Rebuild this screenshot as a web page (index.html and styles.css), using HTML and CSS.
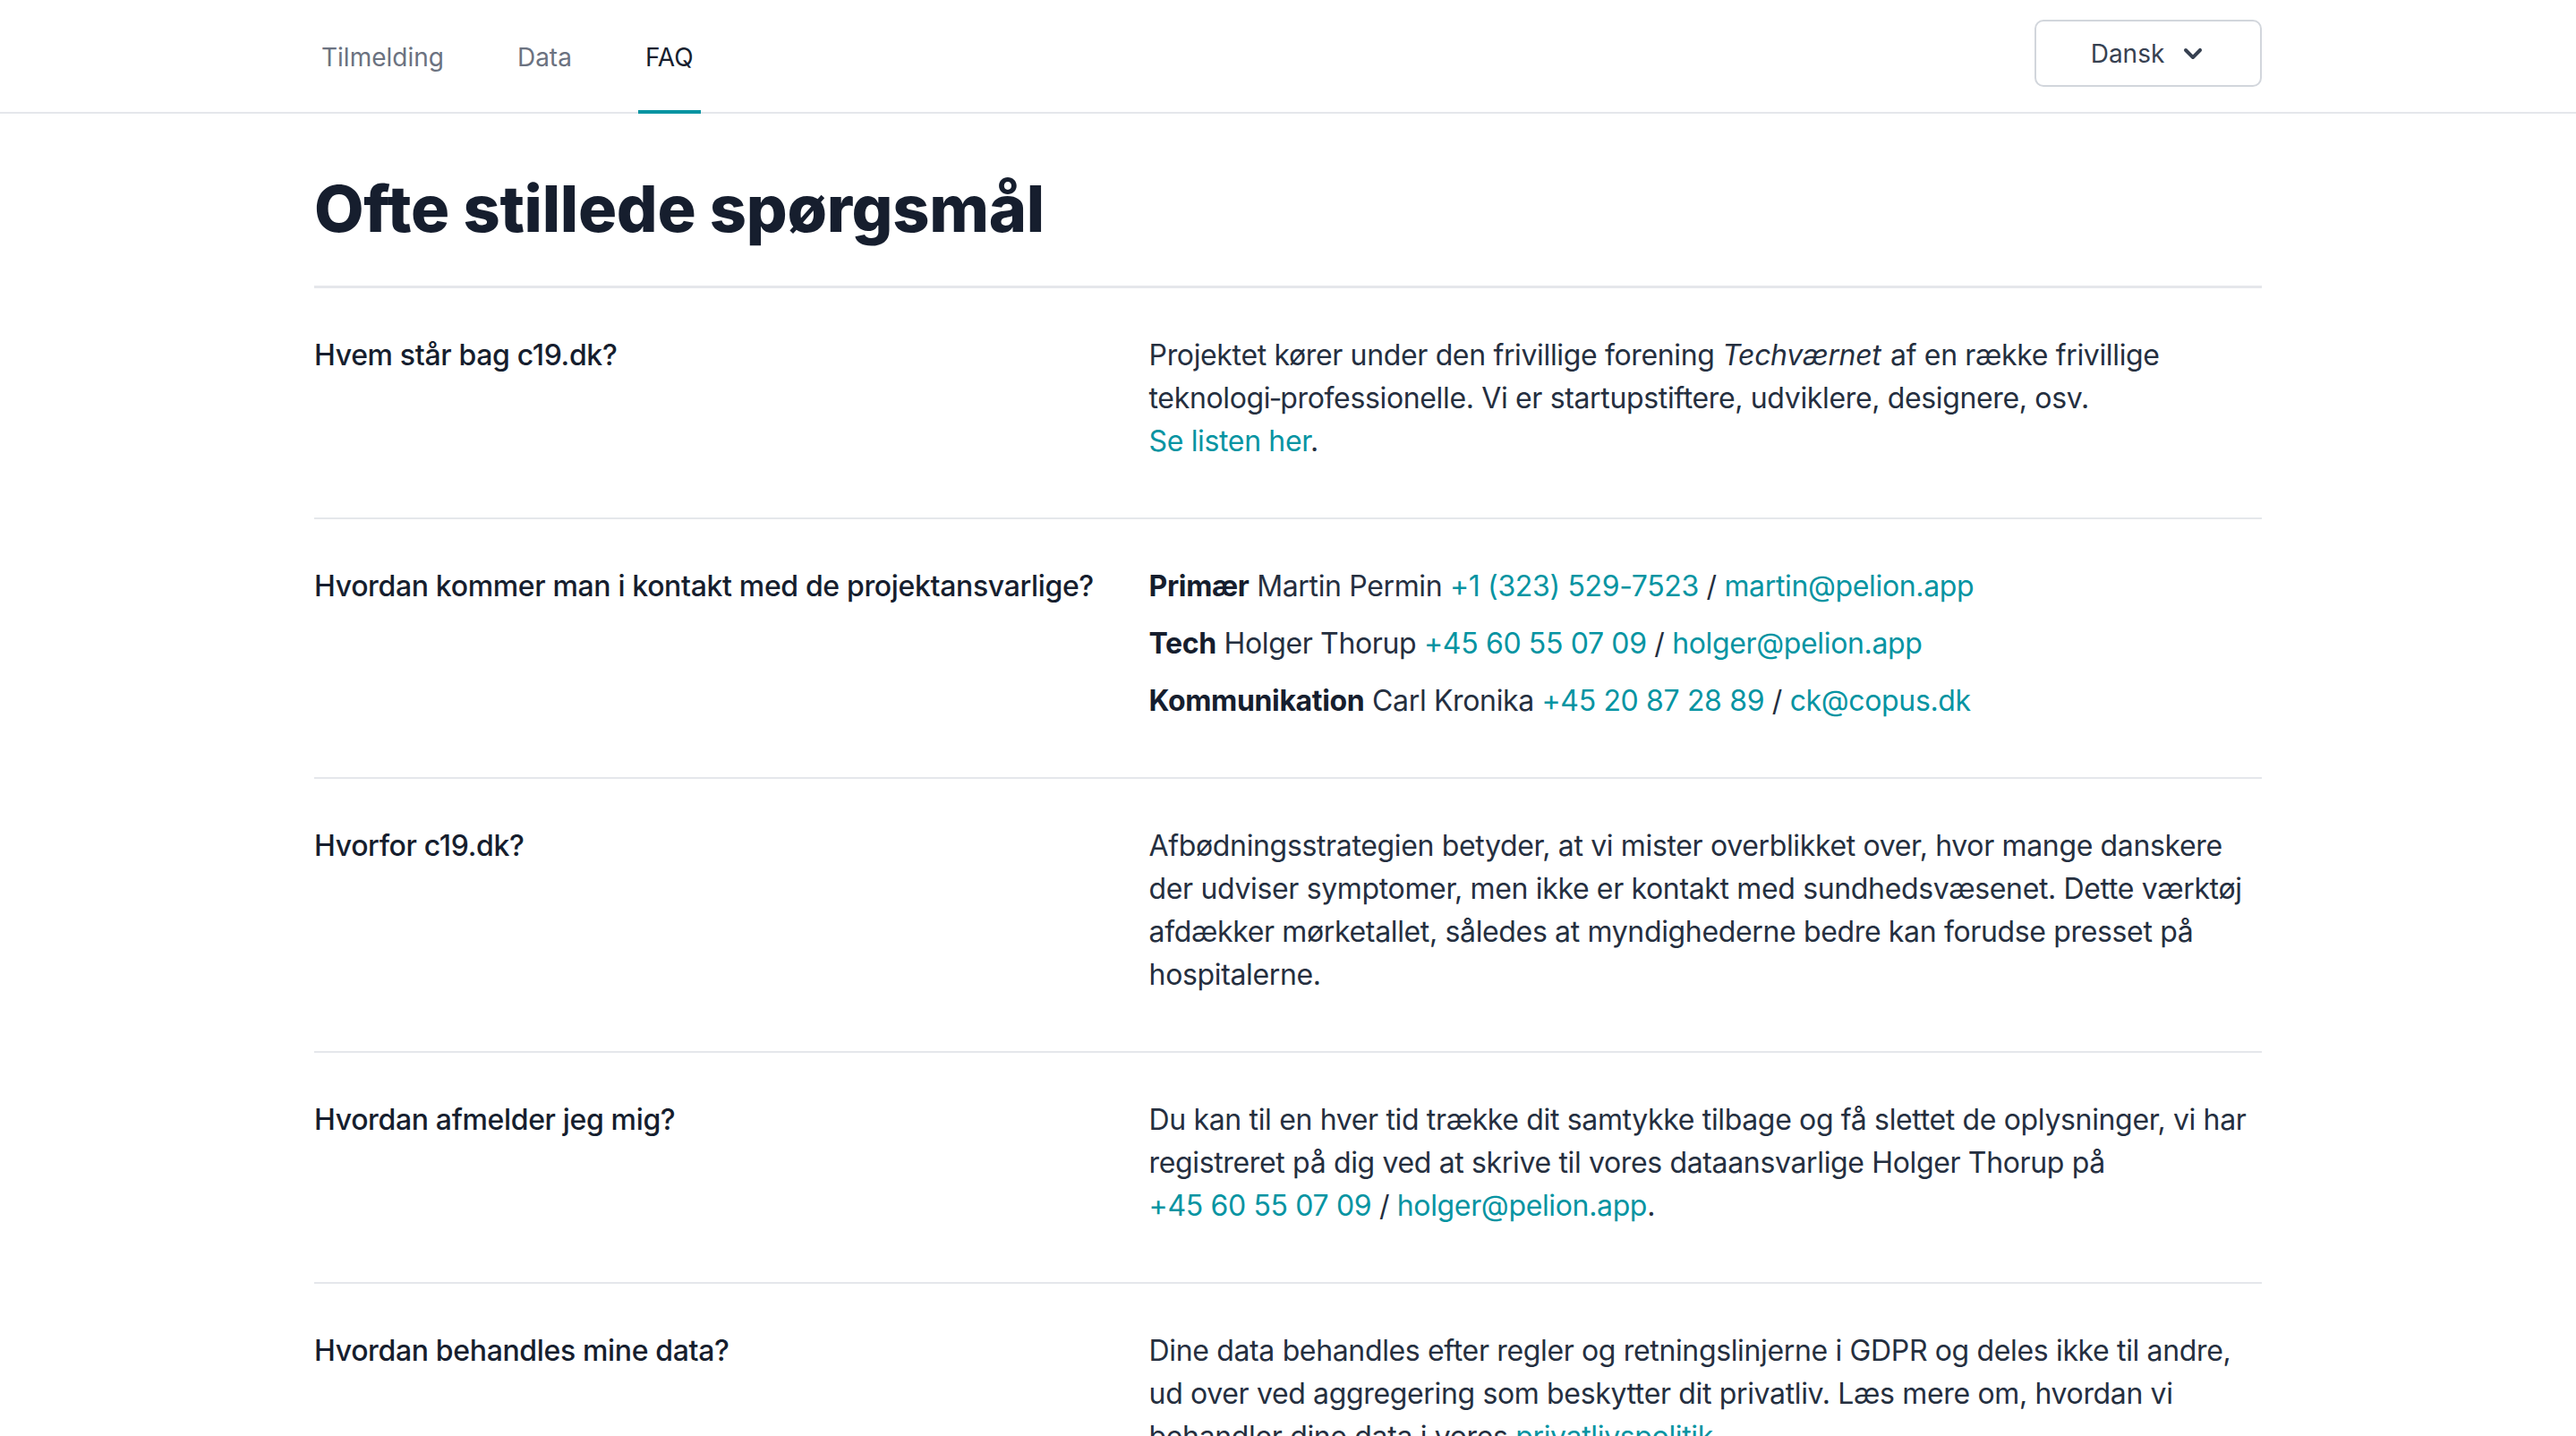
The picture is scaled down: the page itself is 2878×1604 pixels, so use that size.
FILE: index.html
```html
<!DOCTYPE html>
<html lang="da">
<head>
<meta charset="utf-8">
<title>c19.dk – FAQ</title>
<link rel="stylesheet" href="styles.css">
</head>
<body>
<header class="topbar">
  <div class="container topbar-inner">
    <nav class="nav">
      <a class="nav-item" href="#">Tilmelding</a>
      <a class="nav-item" href="#">Data</a>
      <a class="nav-item active" href="#">FAQ</a>
    </nav>
    <button class="lang-btn" type="button">
      <span>Dansk</span>
      <svg class="chev" viewBox="0 0 20 20" fill="currentColor" aria-hidden="true"><path fill-rule="evenodd" d="M5.293 7.293a1 1 0 011.414 0L10 10.586l3.293-3.293a1 1 0 111.414 1.414l-4 4a1 1 0 01-1.414 0l-4-4a1 1 0 010-1.414z" clip-rule="evenodd"/></svg>
    </button>
  </div>
</header>

<main class="container">
  <h1 class="title">Ofte stillede spørgsmål</h1>

  <section class="faq">
    <div class="row">
      <div class="q">Hvem står bag c19.dk?</div>
      <div class="a">
        <p>Projektet kører under den frivillige forening <em>Techværnet</em> af en række frivillige teknologi&#8209;professionelle. Vi er startupstiftere, udviklere, designere, osv.<br><a href="#">Se listen her</a>.</p>
      </div>
    </div>

    <div class="row">
      <div class="q">Hvordan kommer man i kontakt med de projektansvarlige?</div>
      <div class="a contacts">
        <p><strong>Primær</strong> Martin Permin <a href="#">+1 (323) 529-7523</a> / <a href="#">martin@pelion.app</a></p>
        <p><strong>Tech</strong> Holger Thorup <a href="#">+45 60 55 07 09</a> / <a href="#">holger@pelion.app</a></p>
        <p><strong>Kommunikation</strong> Carl Kronika <a href="#">+45 20 87 28 89</a> / <a href="#">ck@copus.dk</a></p>
      </div>
    </div>

    <div class="row">
      <div class="q">Hvorfor c19.dk?</div>
      <div class="a">
        <p>Afbødningsstrategien betyder, at vi mister overblikket over, hvor mange danskere der udviser symptomer, men ikke er kontakt med sundhedsvæsenet. Dette værktøj afdækker mørketallet, således at myndighederne bedre kan forudse presset på hospitalerne.</p>
      </div>
    </div>

    <div class="row">
      <div class="q">Hvordan afmelder jeg mig?</div>
      <div class="a">
        <p>Du kan til en hver tid trække dit samtykke tilbage og få slettet de oplysninger, vi har registreret på dig ved at skrive til vores dataansvarlige Holger Thorup på <br><a href="#">+45 60 55 07 09</a> / <a href="#">holger@pelion.app</a>.</p>
      </div>
    </div>

    <div class="row">
      <div class="q">Hvordan behandles mine data?</div>
      <div class="a">
        <p>Dine data behandles efter regler og retningslinjerne i GDPR og deles ikke til andre, ud over ved aggregering som beskytter dit privatliv. Læs mere om, hvordan vi behandler dine data i vores <a href="#">privatlivspolitik</a>.</p>
      </div>
    </div>
  </section>
</main>
</body>
</html>
```

FILE: styles.css
```css
* { box-sizing: border-box; }

html, body {
  margin: 0;
  padding: 0;
  background: #ffffff;
}

body {
  font-family: Inter, "Noto Sans", "Liberation Sans", sans-serif;
  color: #161e2e;
  -webkit-font-smoothing: antialiased;
}

.container {
  max-width: 2176px;
  margin: 0 auto;
}

/* Top bar */
.topbar {
  border-bottom: 2px solid #e5e7eb;
}

.topbar-inner {
  display: flex;
  justify-content: space-between;
  align-items: center;
  height: 125px;
}

.nav {
  display: flex;
  align-self: stretch;
  gap: 66px;
}

.nav-item {
  display: flex;
  align-items: center;
  padding: 4px 8px 0;
  border-bottom: 4px solid transparent;
  margin-bottom: -2px;
  font-size: 28px;
  font-weight: 400;
  color: #6b7280;
  text-decoration: none;
}

.nav-item.active {
  color: #161e2e;
  border-bottom-color: #0694a2;
}

.lang-btn {
  display: flex;
  align-items: center;
  justify-content: center;
  gap: 12px;
  width: 254px;
  height: 75px;
  margin-top: -6px;
  padding: 0 0 0 6px;
  border: 2px solid #d2d6dc;
  border-radius: 10px;
  background: #fff;
  font-family: inherit;
  font-size: 28px;
  color: #374151;
}

.chev {
  width: 40px;
  height: 40px;
  color: #374151;
}

/* Title */
.title {
  margin: 0;
  padding: 63px 0 43px;
  font-size: 72px;
  line-height: 86px;
  font-weight: 800;
  letter-spacing: -0.3px;
  color: #161e2e;
  border-bottom: 3px solid #e5e7eb;
}

/* FAQ rows */
.row {
  display: grid;
  grid-template-columns: 3fr 4fr;
  padding: 51px 0 61px;
  border-bottom: 2px solid #e5e7eb;
}

.row:last-child {
  border-bottom: 0;
}

.q {
  font-size: 32px;
  line-height: 48px;
  font-weight: 500;
  letter-spacing: -0.35px;
  color: #161e2e;
  padding-right: 32px;
}

.a {
  font-size: 32px;
  line-height: 48px;
  letter-spacing: -0.35px;
  color: #252f3f;
}

.a p {
  margin: 0;
}

.contacts {
  display: flex;
  flex-direction: column;
  gap: 16px;
}

.a strong {
  font-weight: 700;
  color: #161e2e;
}

.a em {
  padding-right: 2px;
}

.a a {
  color: #0694a2;
  text-decoration: none;
}
```
